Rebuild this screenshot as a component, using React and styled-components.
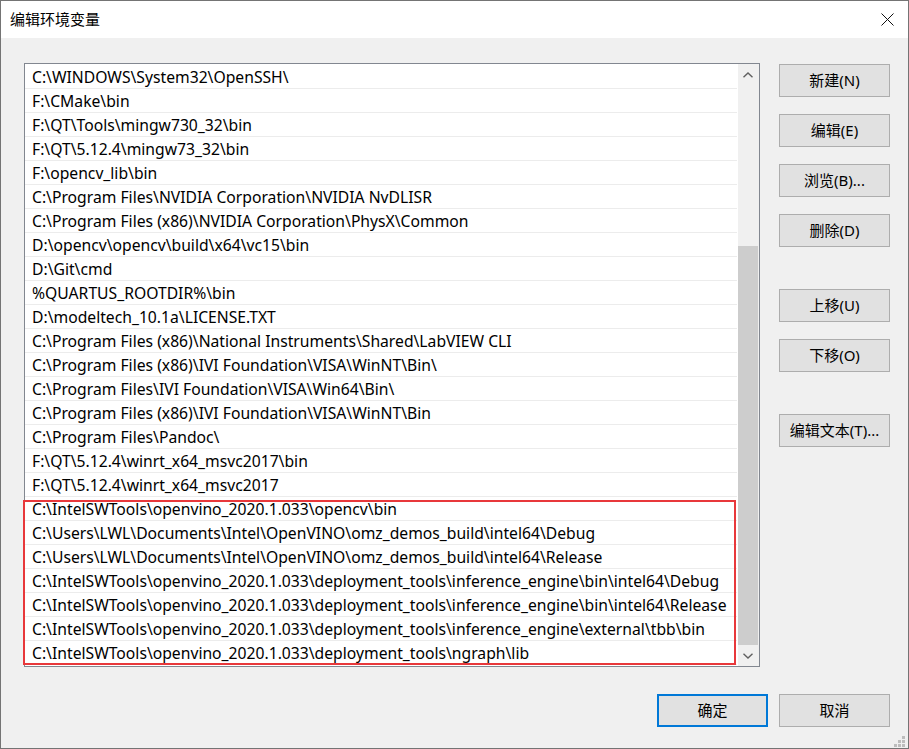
import React from "react";
import styled, { createGlobalStyle } from "styled-components";

const GlobalStyle = createGlobalStyle`
  html, body {
    margin: 0;
    padding: 0;
    background: #ffffff;
  }
  body {
    font-family: "Noto Sans", "Noto Sans CJK SC", sans-serif;
    font-size: 15px;
    color: #000;
  }
`;

const paths = [
  "C:\\WINDOWS\\System32\\OpenSSH\\",
  "F:\\CMake\\bin",
  "F:\\QT\\Tools\\mingw730_32\\bin",
  "F:\\QT\\5.12.4\\mingw73_32\\bin",
  "F:\\opencv_lib\\bin",
  "C:\\Program Files\\NVIDIA Corporation\\NVIDIA NvDLISR",
  "C:\\Program Files (x86)\\NVIDIA Corporation\\PhysX\\Common",
  "D:\\opencv\\opencv\\build\\x64\\vc15\\bin",
  "D:\\Git\\cmd",
  "%QUARTUS_ROOTDIR%\\bin",
  "D:\\modeltech_10.1a\\LICENSE.TXT",
  "C:\\Program Files (x86)\\National Instruments\\Shared\\LabVIEW CLI",
  "C:\\Program Files (x86)\\IVI Foundation\\VISA\\WinNT\\Bin\\",
  "C:\\Program Files\\IVI Foundation\\VISA\\Win64\\Bin\\",
  "C:\\Program Files (x86)\\IVI Foundation\\VISA\\WinNT\\Bin",
  "C:\\Program Files\\Pandoc\\",
  "F:\\QT\\5.12.4\\winrt_x64_msvc2017\\bin",
  "F:\\QT\\5.12.4\\winrt_x64_msvc2017",
  "C:\\IntelSWTools\\openvino_2020.1.033\\opencv\\bin",
  "C:\\Users\\LWL\\Documents\\Intel\\OpenVINO\\omz_demos_build\\intel64\\Debug",
  "C:\\Users\\LWL\\Documents\\Intel\\OpenVINO\\omz_demos_build\\intel64\\Release",
  "C:\\IntelSWTools\\openvino_2020.1.033\\deployment_tools\\inference_engine\\bin\\intel64\\Debug",
  "C:\\IntelSWTools\\openvino_2020.1.033\\deployment_tools\\inference_engine\\bin\\intel64\\Release",
  "C:\\IntelSWTools\\openvino_2020.1.033\\deployment_tools\\inference_engine\\external\\tbb\\bin",
  "C:\\IntelSWTools\\openvino_2020.1.033\\deployment_tools\\ngraph\\lib",
];

const sideButtons = [
  { label: "新建(N)" },
  { label: "编辑(E)" },
  { label: "浏览(B)..." },
  { label: "删除(D)" },
  { label: "上移(U)", group: true },
  { label: "下移(O)" },
  { label: "编辑文本(T)...", group: true },
];

const Window = styled.div`
  position: relative;
  width: 909px;
  height: 749px;
  box-sizing: border-box;
  border: 1px solid #747474;
  background: #f0f0f0;
  display: flex;
  flex-direction: column;
`;

const TitleBar = styled.div`
  height: 37px;
  flex-shrink: 0;
  background: #fff;
  display: flex;
  align-items: center;
  justify-content: space-between;
  padding: 0 14px 0 9px;
`;

const Title = styled.span`
  font-family: "Noto Sans CJK SC", sans-serif;
  font-size: 15px;
  line-height: 20px;
  margin-top: -1px;
`;

const Body = styled.div`
  flex: 1;
  display: flex;
  flex-direction: column;
  padding: 25px 18px 21px 23px;
`;

const Main = styled.div`
  display: flex;
  gap: 19px;
  height: 604px;
`;

const ListBox = styled.div`
  position: relative;
  width: 736px;
  box-sizing: border-box;
  border: 1px solid #828790;
  background: #fff;
  display: flex;
`;

const Rows = styled.ul`
  list-style: none;
  margin: 0;
  padding: 1px 0 0;
  width: 713px;
  overflow: hidden;
`;

const Row = styled.li`
  height: 23px;
  line-height: 25px;
  border-bottom: 1px solid #ececec;
  margin-right: 1px;
  padding-left: 7px;
  white-space: nowrap;
  overflow: hidden;
  font-size: 15.7px;
`;

const Highlight = styled.div`
  position: absolute;
  left: -2px;
  top: 436px;
  width: 713px;
  height: 165px;
  box-sizing: border-box;
  border: 2px solid #e8383b;
  pointer-events: none;
`;

const ScrollBar = styled.div`
  width: 21px;
  display: flex;
  flex-direction: column;
  background: #f0f0f0;
`;

const ArrowButton = styled.div`
  height: 21px;
  flex-shrink: 0;
  display: flex;
  align-items: center;
  justify-content: center;
  padding-right: 1px;
`;

const Track = styled.div`
  flex: 1;
  display: flex;
  flex-direction: column;
  justify-content: flex-end;
`;

const Thumb = styled.div`
  height: 399px;
  width: 20px;
  background: #cdcdcd;
`;

const SideColumn = styled.div`
  display: flex;
  flex-direction: column;
  gap: 17px;
  padding-top: 1px;
`;

const Button = styled.button`
  width: 111px;
  height: 33px;
  box-sizing: border-box;
  margin: 0;
  margin-top: ${(p) => (p.$group ? "25px" : "0")};
  padding: 0 0 2px;
  background: #e1e1e1;
  border: ${(p) => (p.$primary ? "2px solid #0078d7" : "1px solid #adadad")};
  font-family: "Noto Sans", "Noto Sans CJK SC", sans-serif;
  font-size: 15px;
  color: #000;
  line-height: 20px;
`;

const Footer = styled.div`
  display: flex;
  justify-content: flex-end;
  gap: 11px;
  margin-top: 27px;
`;

const Grip = styled.svg`
  position: absolute;
  right: 3px;
  bottom: 1px;
`;

const Chevron = ({ down }) => (
  <svg width="10" height="6" viewBox="0 0 10 6">
    <path
      d={down ? "M0.5 0.8 L5 5 L9.5 0.8" : "M0.5 5.2 L5 1 L9.5 5.2"}
      fill="none"
      stroke="#606060"
      strokeWidth="1.4"
    />
  </svg>
);

export default function App() {
  return (
    <Window>
      <GlobalStyle />
      <TitleBar>
        <Title>编辑环境变量</Title>
        <svg width="13" height="13" viewBox="0 0 13 13">
          <path d="M0.5 0.5 L12.5 12.5 M12.5 0.5 L0.5 12.5" stroke="#111" strokeWidth="1" />
        </svg>
      </TitleBar>
      <Body>
        <Main>
          <ListBox>
            <Rows>
              {paths.map((p, i) => (
                <Row key={i}>{p}</Row>
              ))}
            </Rows>
            <ScrollBar>
              <ArrowButton>
                <Chevron />
              </ArrowButton>
              <Track>
                <Thumb />
              </Track>
              <ArrowButton>
                <Chevron down />
              </ArrowButton>
            </ScrollBar>
            <Highlight />
          </ListBox>
          <SideColumn>
            {sideButtons.map((b) => (
              <Button key={b.label} $group={b.group}>
                {b.label}
              </Button>
            ))}
          </SideColumn>
        </Main>
        <Footer>
          <Button $primary>确定</Button>
          <Button>取消</Button>
        </Footer>
      </Body>
      <Grip width="11" height="11" viewBox="0 0 11 11">
        <rect x="8" y="0" width="3" height="3" fill="#bdbdbd" />
        <rect x="4" y="4" width="3" height="3" fill="#bdbdbd" />
        <rect x="8" y="4" width="3" height="3" fill="#bdbdbd" />
        <rect x="0" y="8" width="3" height="3" fill="#bdbdbd" />
        <rect x="4" y="8" width="3" height="3" fill="#bdbdbd" />
        <rect x="8" y="8" width="3" height="3" fill="#bdbdbd" />
      </Grip>
    </Window>
  );
}
